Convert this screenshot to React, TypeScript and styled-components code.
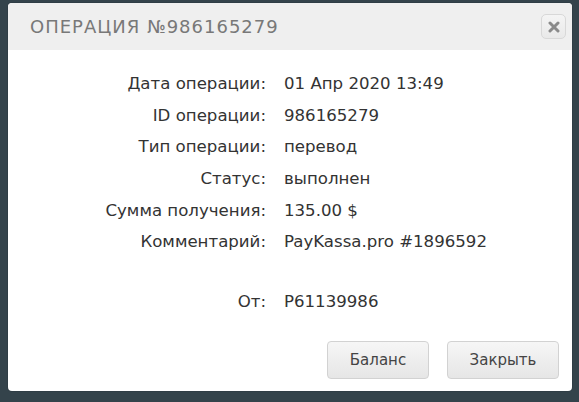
import styled, { createGlobalStyle } from "styled-components";

const Global = createGlobalStyle`
    html, body {
        margin: 0;
        padding: 0;
        background: #34434b;
    }
    body {
        font-family: "DejaVu Sans", Verdana, sans-serif;
    }
`;

const Page = styled.div`
    width: 579px;
    height: 402px;
    padding: 3px 0 0 8px;
    box-sizing: border-box;
`;

const Dialog = styled.div`
    display: flex;
    flex-direction: column;
    width: 564px;
    height: 388px;
    background: #fff;
    border-radius: 4px;
    box-shadow: 0 0 0 1px rgba(0, 0, 0, 0.08);
    overflow: hidden;
`;

const Header = styled.div`
    position: relative;
    display: flex;
    align-items: center;
    height: 47px;
    padding-left: 22px;
    background: #efefef;
`;

const Title = styled.h1`
    margin: 0;
    font-family: "DejaVu Sans", sans-serif;
    font-size: 18px;
    font-weight: normal;
    letter-spacing: 1px;
    color: #787878;
    text-transform: uppercase;
`;

const CloseButton = styled.button`
    position: absolute;
    top: 11px;
    right: 6px;
    width: 25px;
    height: 25px;
    padding: 0;
    display: flex;
    align-items: center;
    justify-content: center;
    border: 1px solid #d8d8d8;
    border-radius: 5px;
    background: linear-gradient(#f4f4f4, #e9e9e9);
    cursor: pointer;
`;

const Details = styled.div`
    display: grid;
    grid-template-columns: 258px 1fr;
    grid-template-rows: repeat(6, 31.6px) 28px 31.6px;
    column-gap: 18px;
    align-items: center;
    padding-top: 18px;
    flex: 1;
    font-size: 16.6px;
    color: #333;
`;

const Label = styled.div`
    text-align: right;
    white-space: nowrap;
`;

const Value = styled.div`
    white-space: nowrap;
`;

const Spacer = styled.div`
    grid-column: 1 / span 2;
`;

const Footer = styled.div`
    display: flex;
    justify-content: flex-end;
    gap: 18px;
    padding: 0 13px 12px 0;
`;

const Button = styled.button<{ $w: number }>`
    width: ${(p) => p.$w}px;
    height: 38px;
    border: 1px solid #d2d2d2;
    border-radius: 4px;
    background: linear-gradient(#f6f6f6, #e6e6e6);
    font-family: "DejaVu Sans", Verdana, sans-serif;
    font-size: 15px;
    color: #444;
    cursor: pointer;
`;

const rows: [string, string][] = [
    ["Дата операции:", "01 Апр 2020 13:49"],
    ["ID операции:", "986165279"],
    ["Тип операции:", "перевод"],
    ["Статус:", "выполнен"],
    ["Сумма получения:", "135.00 $"],
    ["Комментарий:", "PayKassa.pro #1896592"],
];

function App() {
    return (
        <Page>
            <Global />
            <Dialog>
                <Header>
                    <Title>Операция №986165279</Title>
                    <CloseButton aria-label="close">
                        <svg width="12" height="12" viewBox="0 0 12 12">
                            <path d="M2 2 L10 10 M10 2 L2 10" stroke="#8a8a8a" strokeWidth="3" strokeLinecap="round" />
                        </svg>
                    </CloseButton>
                </Header>
                <Details>
                    {rows.map(([l, v]) => (
                        <>
                            <Label key={l}>{l}</Label>
                            <Value key={l + "v"}>{v}</Value>
                        </>
                    ))}
                    <Spacer />
                    <Label>От:</Label>
                    <Value>P61139986</Value>
                </Details>
                <Footer>
                    <Button $w={102}>Баланс</Button>
                    <Button $w={112}>Закрыть</Button>
                </Footer>
            </Dialog>
        </Page>
    );
}

export default App;
